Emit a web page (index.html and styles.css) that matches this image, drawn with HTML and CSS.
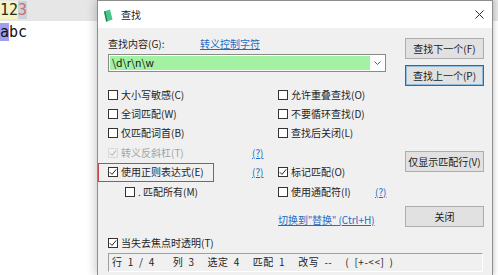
FILE: index.html
```html
<!DOCTYPE html>
<html lang="zh-CN">
<head>
<meta charset="utf-8">
<title>查找</title>
<link rel="stylesheet" href="styles.css">
</head>
<body>
<div class="editor">
  <div class="line cur"><span class="hl-y">12</span><span class="hl-g">3</span></div>
  <div class="line"><span class="hl-b">a</span>bc</div>
</div>

<div class="dialog">
  <div class="titlebar">
    <svg class="appicon" width="10" height="13" viewBox="0 0 10 13"><polygon points="1,2.5 7,0.5 9.5,10.5 3.2,12.8" fill="#4cc58a"/><polygon points="1,2.5 2.4,2 4.6,12.3 3.2,12.8" fill="#1f8a57"/></svg>
    <span class="title">查找</span>
    <svg class="close" width="9" height="9" viewBox="0 0 9 9"><path d="M0.5 0.5 L8.5 8.5 M8.5 0.5 L0.5 8.5" stroke="#2b2b2b" stroke-width="1" fill="none"/></svg>
  </div>

  <div class="body">
    <div class="top">
      <div class="main">
        <div class="labelrow"><span class="lbl">查找内容(G):</span><a class="link">转义控制字符</a></div>
        <div class="combo"><span class="field">\d\r\n\w</span><span class="arrow"><svg width="7" height="4" viewBox="0 0 7 4"><polyline points="0.5,0.5 3.5,3.5 6.5,0.5" stroke="#606060" fill="none" stroke-width="1"/></svg></span></div>

        <div class="opts">
          <div class="cell"><span class="cb"><span class="box"></span>大小写敏感(C)</span></div>
          <div class="cell"><span class="cb"><span class="box"></span>允许重叠查找(O)</span></div>

          <div class="cell"><span class="cb"><span class="box"></span>全词匹配(W)</span></div>
          <div class="cell"><span class="cb"><span class="box"></span>不要循环查找(D)</span></div>

          <div class="cell"><span class="cb"><span class="box"></span>仅匹配词首(B)</span></div>
          <div class="cell"><span class="cb"><span class="box"></span>查找后关闭(L)</span></div>

          <div class="cell"><span class="cb w1 disabled"><span class="box checked"><svg width="8" height="8" viewBox="0 0 8 8"><polyline points="0.8,4.2 3,6.4 7.2,1.4" fill="none" stroke="#a9a9a9" stroke-width="1"/></svg></span>转义反斜杠(T)</span><a class="link help">(?)</a></div>
          <div class="cell"></div>

          <div class="cell marked"><span class="cb w1"><span class="box checked"><svg width="8" height="8" viewBox="0 0 8 8"><polyline points="0.8,4.2 3,6.4 7.2,1.4" fill="none" stroke="#222" stroke-width="1"/></svg></span>使用正则表达式(E)</span><a class="link help">(?)</a></div>
          <div class="cell"><span class="cb"><span class="box checked"><svg width="8" height="8" viewBox="0 0 8 8"><polyline points="0.8,4.2 3,6.4 7.2,1.4" fill="none" stroke="#222" stroke-width="1"/></svg></span>标记匹配(O)</span></div>

          <div class="cell indent"><span class="cb"><span class="box"></span>. 匹配所有(M)</span></div>
          <div class="cell"><span class="cb w2"><span class="box"></span>使用通配符(I)</span><a class="link help">(?)</a></div>
        </div>

        <div class="switch"><a class="link">切换到<span class="q">"</span>替换<span class="q">"</span> (Ctrl+H)</a></div>

        <div class="transp"><span class="cb"><span class="box checked"><svg width="8" height="8" viewBox="0 0 8 8"><polyline points="0.8,4.2 3,6.4 7.2,1.4" fill="none" stroke="#222" stroke-width="1"/></svg></span>当失去焦点时透明(T)</span></div>
      </div>

      <div class="btns">
        <button class="btn">查找下一个(F)</button>
        <button class="btn focus">查找上一个(P)</button>
        <button class="btn b3">仅显示匹配行(V)</button>
        <button class="btn b4">关闭</button>
      </div>
    </div>

    <div class="status">
      <span class="s1">行 1 / 4</span>
      <span>列 3</span>
      <span>选定 4</span>
      <span>匹配 1</span>
      <span>改写 --</span>
      <span>( [+-&lt;&lt;] )</span>
    </div>
  </div>
</div>
</body>
</html>
```

FILE: styles.css
```css
html, body {
  margin: 0;
  padding: 0;
}
body {
  width: 498px;
  height: 275px;
  overflow: hidden;
  position: relative;
  background: #ffffff;
  font-family: "Noto Sans CJK SC", "Noto Sans", sans-serif;
  color: #1e1e1e;
}

/* editor */
.editor {
  font-family: "DejaVu Sans Mono", monospace;
  font-size: 15px;
  line-height: 22px;
  color: #111;
}
.line {
  height: 22px;
  white-space: pre;
}
.line.cur {
  background: #e6e6e6;
  height: 21px;
  line-height: 21px;
}
.hl-y {
  background: #f4f4c6;
  color: #2e2e18;
}
.hl-g {
  background: #cdd1da;
  color: #c87070;
}
.hl-b {
  background: #9e9ef2;
}

/* dialog */
.dialog {
  position: absolute;
  left: 97px;
  top: 0;
  width: 396px;
  height: 275px;
  box-sizing: border-box;
  border: 1px solid #8e8e8e;
  border-bottom-width: 0;
  background: #f0f0f0;
  box-shadow: -3px 0 8px rgba(0, 0, 0, 0.16), 2px 0 4px rgba(0, 0, 0, 0.12);
  font-size: 10px;
}
.titlebar {
  height: 27px;
  background: #ffffff;
  display: flex;
  align-items: center;
  padding: 0 8px 0 5px;
}
.appicon {
  display: block;
  margin-top: 1px;
}
.title {
  margin-left: 8px;
  font-size: 10px;
  line-height: 12px;
  color: #1a1a1a;
}
.close {
  display: block;
  margin-left: auto;
}

.body {
  padding: 10px 8px 0 10px;
  display: flex;
  flex-direction: column;
}
.top {
  display: flex;
  justify-content: space-between;
}
.main {
  display: flex;
  flex-direction: column;
  width: 290px;
}
.labelrow {
  display: flex;
  height: 12px;
  line-height: 12px;
}
.lbl {
  width: 92px;
}
.link {
  color: #1f6cc4;
  text-decoration: underline;
  cursor: pointer;
}
.q {
  font-family: "Noto Sans", sans-serif;
}
.combo {
  margin-top: 4px;
  width: 278px;
  height: 18px;
  box-sizing: border-box;
  border: 1px solid #8a8a8a;
  background: #fff;
  display: flex;
  padding: 1px;
}
.field {
  flex: 1;
  background: #a3f2a3;
  line-height: 14px;
  padding-left: 2px;
  font-size: 10.5px;
  color: #111;
}
.arrow {
  width: 14px;
  display: flex;
  align-items: center;
  justify-content: center;
}
.arrow svg {
  display: block;
}

.opts {
  margin-top: 13px;
  display: grid;
  grid-template-columns: 170px 1fr;
  grid-auto-rows: 19.4px;
}
.cell {
  display: flex;
  align-items: center;
  position: relative;
}
.cell.indent {
  padding-left: 17px;
}
.cell.marked::after {
  content: "";
  position: absolute;
  left: -10px;
  top: 0;
  width: 116px;
  height: 19px;
  box-sizing: border-box;
  border: 1.5px solid #c9434f;
}
.cb {
  display: flex;
  align-items: center;
  line-height: 12px;
  white-space: nowrap;
}
.cb.w1 {
  width: 144px;
}
.cb.w2 {
  width: 97px;
}
.cb.disabled {
  color: #a3a3a3;
}
.box {
  width: 10px;
  height: 10px;
  box-sizing: border-box;
  border: 1px solid #333333;
  background: #ffffff;
  margin-right: 3px;
  display: flex;
  align-items: center;
  justify-content: center;
  flex: none;
}
.box svg {
  display: block;
}
.disabled .box {
  border-color: #dadada;
  background: transparent;
}
.help {
  line-height: 12px;
}

.switch {
  margin-top: 12.6px;
  height: 12px;
  line-height: 12px;
  padding-left: 170px;
}
.transp {
  margin-top: 8px;
  height: 19px;
  display: flex;
  align-items: center;
}

.btns {
  width: 79px;
  display: flex;
  flex-direction: column;
}
.btn {
  height: 21px;
  box-sizing: border-box;
  border: 1px solid #adadad;
  background: #e1e1e1;
  font-family: "Noto Sans CJK SC", "Noto Sans", sans-serif;
  font-size: 10px;
  color: #1a1a1a;
  padding: 0;
  line-height: 12px;
}
.btn.focus {
  margin-top: 6px;
  border-color: #0078d7;
  box-shadow: inset 0 0 0 1px rgba(0, 120, 215, 0.35);
}
.btn.b3 {
  margin-top: 65px;
}
.btn.b4 {
  margin-top: 34px;
}

.status {
  width: 375px;
  height: 19px;
  box-sizing: border-box;
  border-top: 1px solid #a0a0a0;
  border-left: 1px solid #a0a0a0;
  border-right: 1px solid #ffffff;
  border-bottom: 1px solid #ffffff;
  display: flex;
  align-items: center;
  padding-left: 3px;
  line-height: 12px;
  white-space: pre;
  word-spacing: 2.5px;
  letter-spacing: 0.5px;
}
.status span {
  margin-right: 13px;
}
.status .s1 {
  margin-right: 18px;
}
```
